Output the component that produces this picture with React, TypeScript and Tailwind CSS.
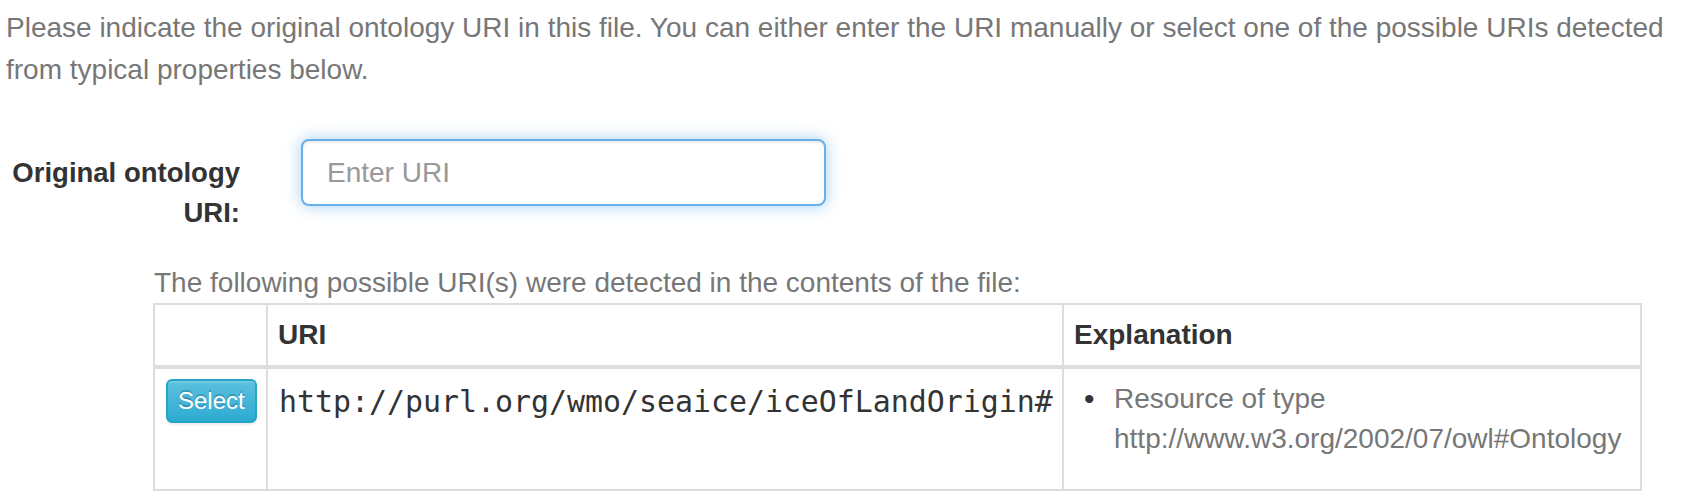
import React from 'react';

const uri = 'http://purl.org/wmo/seaice/iceOfLandOrigin#';

const App: React.FC = () => {
  return (
    <div className="w-[1682px] h-[496px] overflow-hidden bg-white font-['Liberation_Sans',Arial,sans-serif] text-[28px] leading-[40px] text-[#333]">
      <p className="pl-[6px] pt-[7px] pr-[4px] leading-[42px] text-[#777]">
        Please indicate the original ontology URI in this file. You can either enter the URI manually or select one
        of the possible URIs detected from typical properties below.
      </p>

      <div className="mt-[48px] flex items-start">
        <label htmlFor="ontology-uri" className="w-[240px] pt-[14px] text-right text-[27.5px] font-bold">
          Original ontology URI:
        </label>
        <input
          id="ontology-uri"
          type="text"
          placeholder="Enter URI"
          className="ml-[61px] h-[67px] w-[525px] rounded-[8px] border-2 border-[#66afe9] bg-white px-[24px] text-[28px] text-[#555] outline-none shadow-[inset_0_2px_2px_rgba(0,0,0,0.075),0_0_16px_rgba(102,175,233,0.6)] placeholder:text-[#999]"
        />
      </div>

      <div className="ml-[153px] mt-[30px]">
        <p className="pl-[1px] text-[#777]">
          The following possible URI(s) were detected in the contents of the file:
        </p>
        <table className="w-[1489px] table-fixed border-separate border-spacing-0 border-l-2 border-t-2 border-[#ddd]">
          <colgroup>
            <col className="w-[113px]" />
            <col className="w-[796px]" />
            <col className="w-[578px]" />
          </colgroup>
          <thead>
            <tr>
              <th className="border-b-4 border-r-2 border-[#ddd] p-[10px] text-left align-bottom"></th>
              <th className="border-b-4 border-r-2 border-[#ddd] p-[10px] text-left align-bottom font-bold">URI</th>
              <th className="border-b-4 border-r-2 border-[#ddd] p-[10px] text-left align-bottom font-bold">
                Explanation
              </th>
            </tr>
          </thead>
          <tbody>
            <tr>
              <td className="border-b-2 border-r-2 border-[#ddd] p-[10px] align-top">
                <button
                  type="button"
                  className="ml-[1px] block h-[44px] rounded-[6px] border-2 border-[#28a4c9] bg-linear-to-b from-[#5bc0de] to-[#2aabd2] px-[10px] text-[24px] leading-[36px] text-white [text-shadow:0_-2px_0_rgba(0,0,0,0.2)] shadow-[inset_0_2px_0_rgba(255,255,255,0.15),0_2px_2px_rgba(0,0,0,0.075)]"
                >
                  Select
                </button>
              </td>
              <td className="border-b-2 border-r-2 border-[#ddd] p-[10px] align-top">
                <div className="whitespace-nowrap pl-[1px] pt-[3px] font-['DejaVu_Sans_Mono',monospace] text-[29.9px]">
                  {uri}
                </div>
              </td>
              <td className="border-b-2 border-r-2 border-[#ddd] p-[10px] align-top">
                <ul className="mb-[20px] pl-[10px]">
                  <li className="flex">
                    <span className="w-[30px] shrink-0 text-[30px]">•</span>
                    <span className="text-[#777]">Resource of type http://www.w3.org/2002/07/owl#Ontology</span>
                  </li>
                </ul>
              </td>
            </tr>
          </tbody>
        </table>
      </div>
    </div>
  );
};

export default App;
